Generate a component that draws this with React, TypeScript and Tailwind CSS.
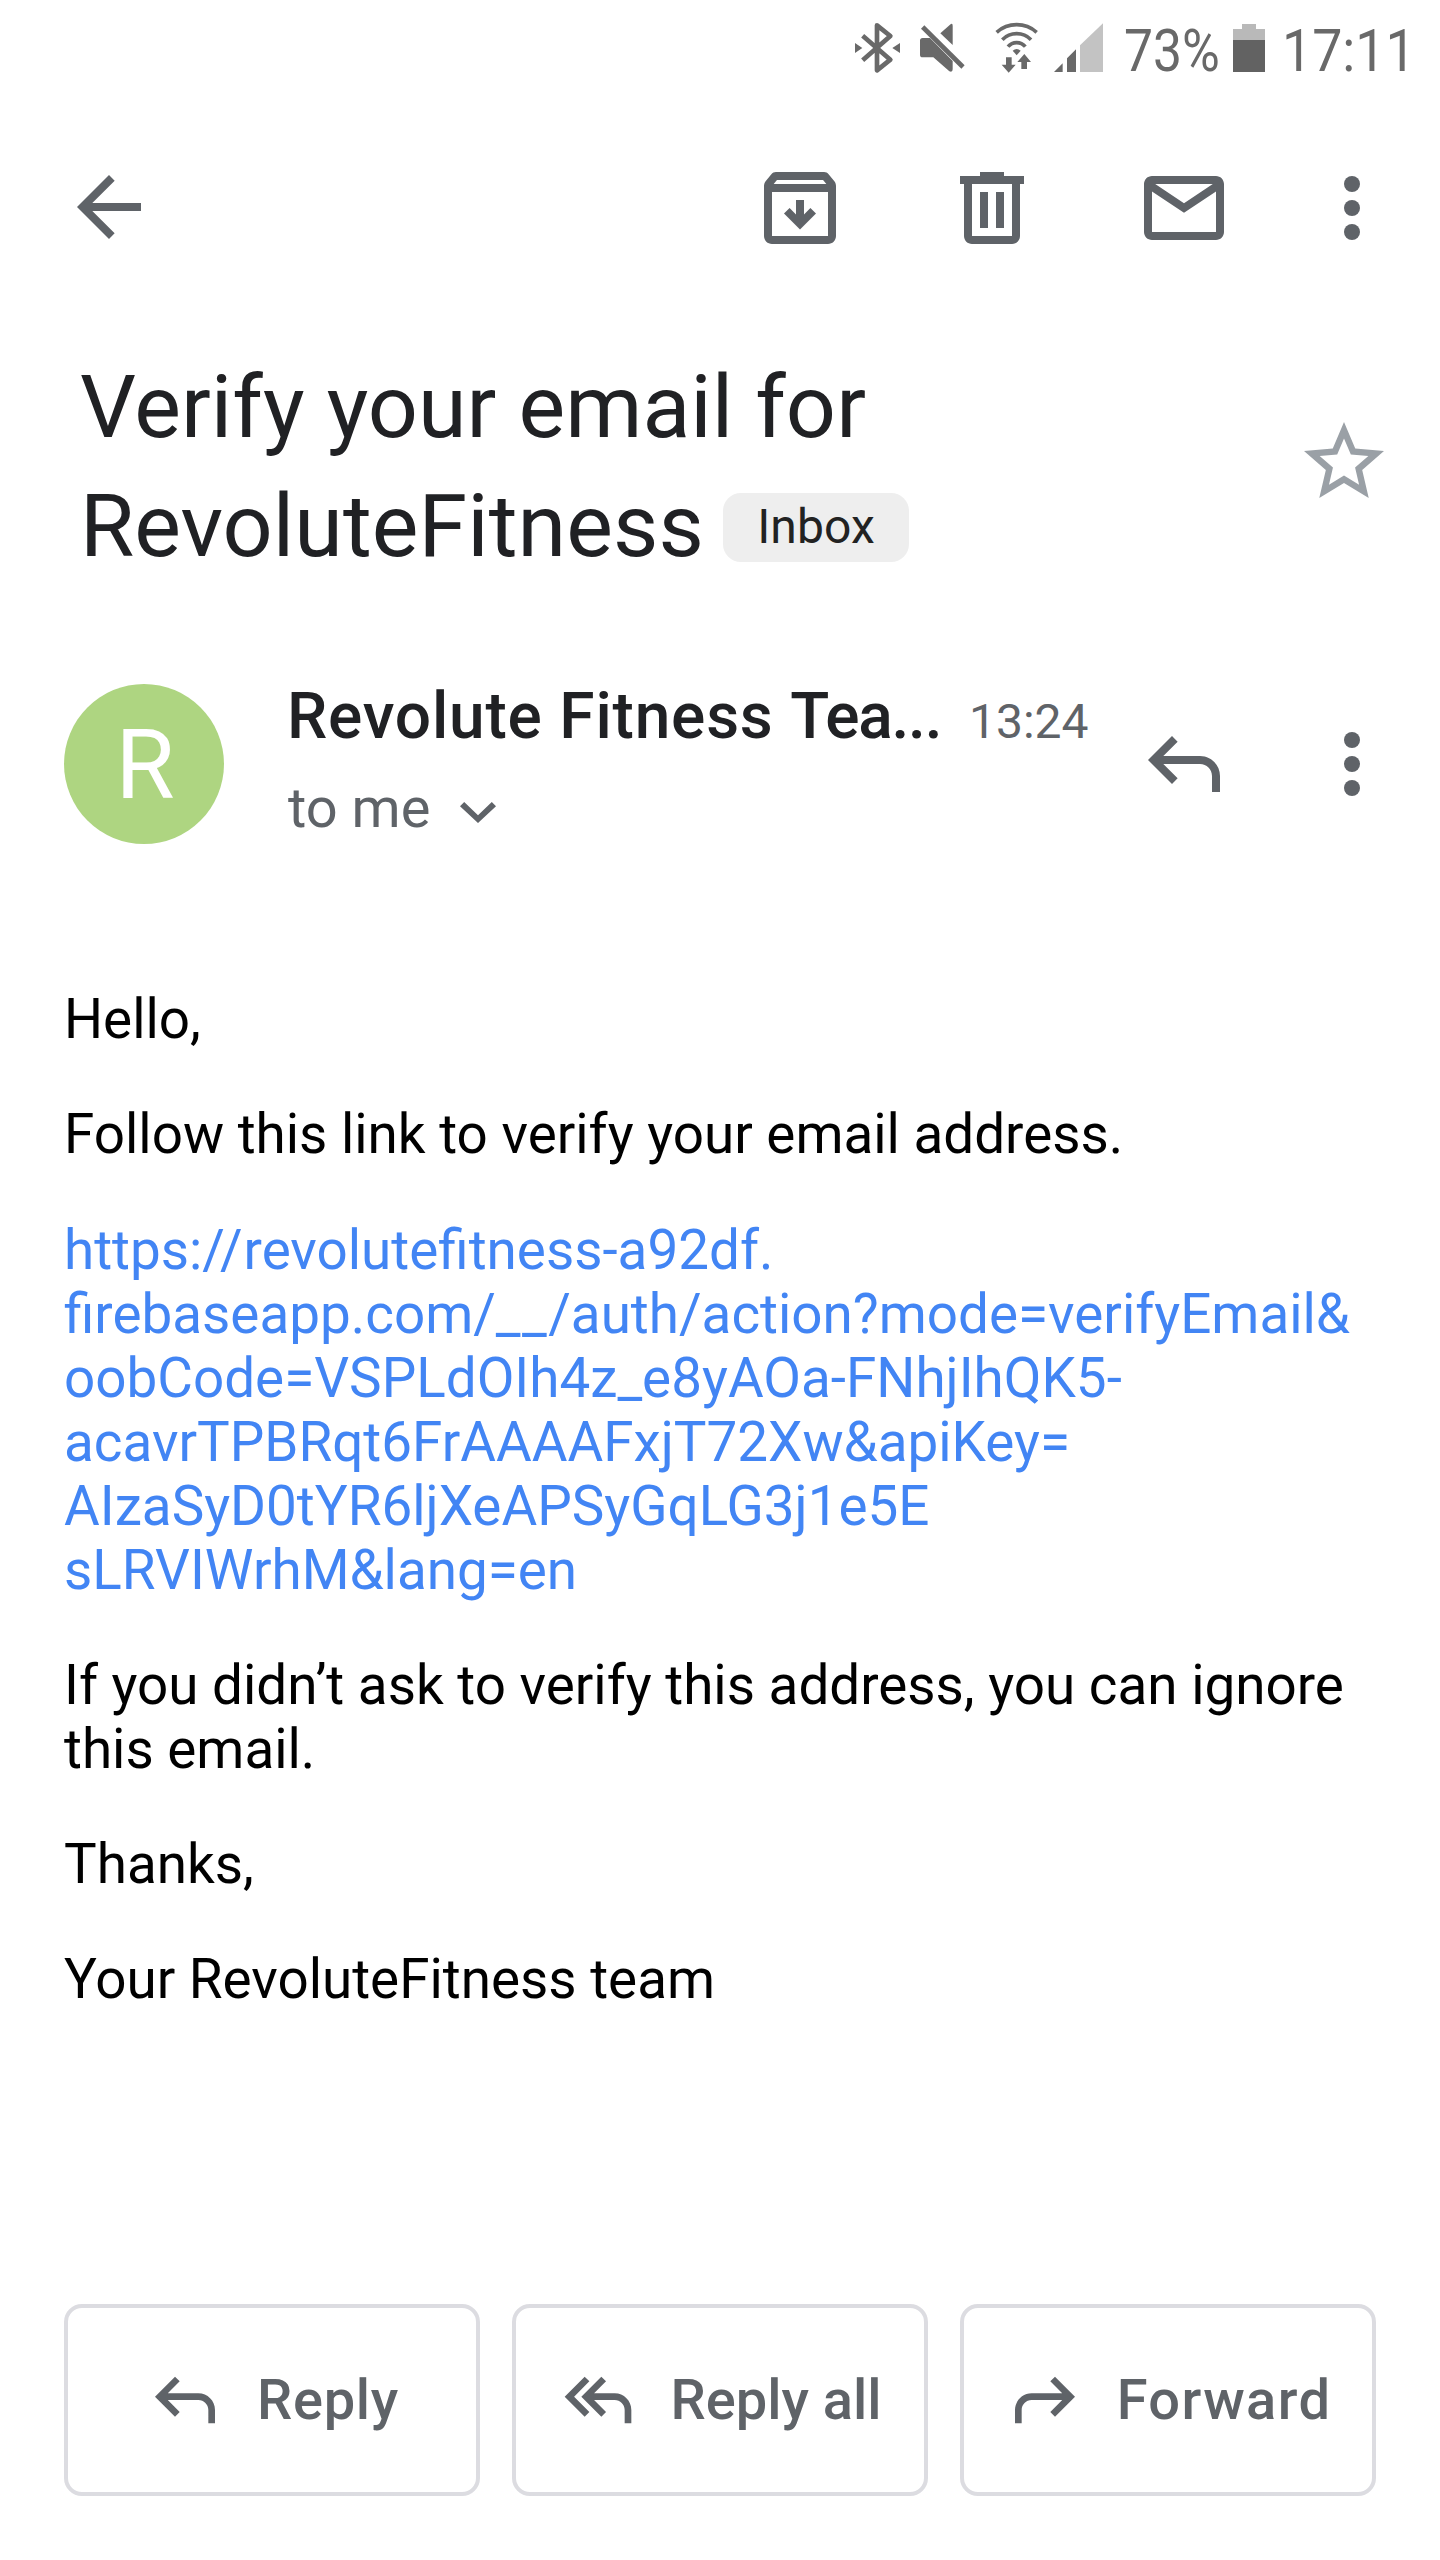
import type { ReactNode } from "react";

function Icon({ children, className }: { children: ReactNode; className: string }) {
  return (
    <svg viewBox="0 0 24 24" fill="currentColor" className={`block shrink-0 ${className}`}>
      {children}
    </svg>
  );
}

const replyPath =
  "M9 5l1.41 1.41L6.83 10H16c2.76 0 5 2.24 5 5v4h-2v-4c0-1.66-1.34-3-3-3H6.83l3.58 3.59L9 17l-6-6z";

function MoreIcon() {
  return (
    <Icon className="size-24">
      <circle cx="12" cy="6" r="2" />
      <circle cx="12" cy="12" r="2" />
      <circle cx="12" cy="18" r="2" />
    </Icon>
  );
}

function StatusBar() {
  return (
    <div className="flex h-24 shrink-0 items-start pl-[848px] pt-4 text-[60px] leading-[64px] text-[#696969]">
      <svg viewBox="0 0 192 192" className="size-16 shrink-0" fill="currentColor">
        <path
          d="M44 59L127 131 87 163V28L127 60 44 133"
          fill="none"
          stroke="currentColor"
          strokeWidth="14"
          strokeLinejoin="round"
        />
        <path d="M21 81v30l22-15zM156 81v30l-23-15z" />
      </svg>
      <svg viewBox="192 0 192 192" className="size-16 shrink-0" fill="currentColor">
        <path d="M277 52L306 26Q314 20 314 29V87z" />
        <path d="M224 66H246L314 135V160Q314 170 304 166L256 124H224Q216 124 216 116V74Q216 66 224 66z" />
        <path d="M224 33L345 153" stroke="currentColor" strokeWidth="14" />
      </svg>
      <svg viewBox="384 0 216 192" className="h-16 w-[72px] shrink-0" fill="currentColor">
        <path
          d="M446 49A90 90 0 0 1 566 49M463 71A60 60 0 0 1 549 71M480 92A34 34 0 0 1 532 92"
          fill="none"
          stroke="currentColor"
          strokeWidth="11"
        />
        <path d="M494 104Q506 94 518 104L506 118z" />
        <path d="M474 124h17v22h12l-21 24-21-24h13zM520 159v-21h-12l21-24 20 24h-12v21z" />
      </svg>
      <svg viewBox="600 0 180 192" className="h-16 w-[60px] shrink-0" fill="currentColor">
        <path d="M618 168L644 142V168zM657 168V127L684 100V168z" />
        <path d="M696 168V88L765 22V168z" fill="#c3c3c3" />
      </svg>
      <div className="ml-4 mt-[3px] w-[109px] shrink-0 origin-left scale-x-[0.86]">73%</div>
      <div className="mt-2 flex w-8 shrink-0 flex-col items-center">
        <div className="h-[5px] w-[14px] bg-[#b9b9b9]" />
        <div className="h-[11px] w-8 bg-[#b9b9b9]" />
        <div className="h-8 w-8 bg-[#626262]" />
      </div>
      <div className="ml-[17px] mt-[3px] w-[149px] shrink-0 origin-left scale-x-[0.895]">17:11</div>
    </div>
  );
}

function Toolbar() {
  return (
    <div className="flex h-56 shrink-0 items-center pl-[61px] pr-10">
      <Icon className="mr-auto size-24 -mt-0.5">
        <path d="M20 11H7.83l5.59-5.59L12 4l-8 8 8 8 1.41-1.41L7.83 13H20v-2z" />
      </Icon>
      <Icon className="mr-24 size-24">
        <path d="M20.54 5.23l-1.39-1.68C18.88 3.21 18.47 3 18 3H6c-.47 0-.88.21-1.16.55L3.46 5.23C3.17 5.57 3 6.02 3 6.5V19c0 1.1.9 2 2 2h14c1.1 0 2-.9 2-2V6.5c0-.48-.17-.93-.46-1.27zM6.24 5h11.52l.83 1H5.42l.82-1zM5 19V8h14v11H5zm8-9h-2v3.6l-1.6-1.6L8 13.4l4 4 4-4-1.4-1.4-1.6 1.6z" />
      </Icon>
      <Icon className="mr-24 size-24">
        <path d="M15 4V3H9v1H4v2h1v13c0 1.1.9 2 2 2h10c1.1 0 2-.9 2-2V6h1V4h-5zm2 15H7V6h10v13zM9 8h2v9H9zm4 0h2v9h-2z" />
      </Icon>
      <Icon className="mr-[72px] size-24">
        <path d="M20 4H4c-1.1 0-2 .9-2 2v12c0 1.1.9 2 2 2h16c1.1 0 2-.9 2-2V6c0-1.1-.9-2-2-2zm-.8 2L12 10.8 4.8 6h14.4zM4 18V7.900l8 5.300 8-5.300V18H4z" />
      </Icon>
      <MoreIcon />
    </div>
  );
}

function Subject() {
  return (
    <div className="mt-[27px] flex h-[238px] shrink-0 items-start pl-20 pr-12">
      <h1 className="flex-1 text-[88px] font-normal leading-[119px] tracking-[0.08px] text-[#202124]">
        <span className="block">Verify your email for</span>
        <span className="flex items-start">
          RevoluteFitness
          <span className="ml-[19px] mt-[27px] h-[69px] w-[186px] rounded-[18px] bg-[#eeeeee] text-center text-[48px] leading-[67px] text-[#222222]">
            Inbox
          </span>
        </span>
      </h1>
      <Icon className="mt-[67px] size-24 text-[#9aa0a6]">
        <path d="M22 9.24l-7.19-.62L12 2 9.19 8.63 2 9.24l5.46 4.73L5.82 21 12 17.27 18.18 21l-1.63-7.03L22 9.24zM12 15.4l-3.76 2.27 1-4.28-3.32-2.88 4.38-.38L12 6.1l1.71 4.04 4.38.38-3.32 2.88 1 4.28L12 15.4z" />
      </Icon>
    </div>
  );
}

function Sender() {
  return (
    <div className="mt-[95px] flex h-[168px] shrink-0 items-center pl-16 pr-10">
      <div className="size-40 shrink-0 rounded-full bg-[#aed581] pl-0.5 text-center text-[96px] leading-[162px] text-white">
        R
      </div>
      <div className="ml-[60px] flex-1 self-start pt-px">
        <div className="flex items-baseline leading-[72px]">
          <span className="w-[685px] whitespace-nowrap pl-[3px] text-[64px] font-medium tracking-[0.8px] text-[#202124]">
            Revolute Fitness <span className="tracking-[-1.2px]">Tea...</span>
          </span>
          <span className="text-[48px]">13:24</span>
        </div>
        <div className="mt-[18px] flex h-16 items-center pl-1 text-[56px] leading-[64px]">
          to me
          <svg viewBox="0 0 36 21" className="ml-[30px] mt-2 h-[21px] w-9" fill="currentColor">
            <path d="M4.2 0L18 13.2 31.8 0 36 4.2 18 21 0 4.2z" />
          </svg>
        </div>
      </div>
      <Icon className="mr-[72px] size-24">
        <path d={replyPath} />
      </Icon>
      <MoreIcon />
    </div>
  );
}

const linkTail = [
  "oobCode=VSPLdOIh4z_e8yAOa-FNhjIhQK5-",
  "acavrTPBRqt6FrAAAAFxjT72Xw&apiKey=",
  "AIzaSyD0tYR6ljXeAPSyGqLG3j1e5E",
  "sLRVIWrhM&lang=en",
];

function Message() {
  return (
    <div className="mt-[139px] flex flex-col gap-[51.3px] pl-16 pr-12 text-[54.8px] leading-[64px] text-black">
      <p>Hello,</p>
      <p>Follow this link to verify your email address.</p>
      <a className="block whitespace-nowrap text-[#4285f4]">
        <span className="block">
          https:<span className="tracking-[1px]">//</span>revolutefitness-a92df.
        </span>
        <span className="block">
          firebaseapp.com/<span className="tracking-[1.5px]">__</span>/auth/action?mode=verifyEmail&amp;
        </span>
        {linkTail.map((line) => (
          <span key={line} className="block">
            {line}
          </span>
        ))}
      </a>
      <p>
        If you didn’t ask to verify this address, you can ignore
        <br />
        this email.
      </p>
      <p>Thanks,</p>
      <p>Your RevoluteFitness team</p>
    </div>
  );
}

function ActionButton({ label, children }: { label: ReactNode; children: ReactNode }) {
  return (
    <button className="flex h-48 flex-1 items-center justify-center gap-8 whitespace-nowrap rounded-[18px] border-4 border-[#dcdce1] text-[56px] font-medium leading-[64px]">
      <Icon className="size-20">{children}</Icon>
      {label}
    </button>
  );
}

export default function App() {
  return (
    <div className="flex h-[2560px] w-[1440px] flex-col overflow-hidden bg-white font-['Roboto',sans-serif] text-[#5f6368]">
      <StatusBar />
      <Toolbar />
      <Subject />
      <Sender />
      <Message />
      <div className="mt-auto flex gap-8 px-16 pb-16">
        <ActionButton label={<span className="tracking-[0.7px]">Reply</span>}>
          <path d={replyPath} />
        </ActionButton>
        <ActionButton label="Reply all">
          <path d="M8 5l1.41 1.41L4.83 11l4.58 4.59L8 17l-6-6z" />
          <path d="M13 5l1.41 1.41L10.83 10H17c2.76 0 5 2.24 5 5v4h-2v-4c0-1.66-1.34-3-3-3h-6.17l3.58 3.59L13 17l-6-6z" />
        </ActionButton>
        <ActionButton label={<span className="tracking-[1.4px]">Forward</span>}>
          <path d={replyPath} transform="matrix(-1 0 0 1 24 0)" />
        </ActionButton>
      </div>
    </div>
  );
}
